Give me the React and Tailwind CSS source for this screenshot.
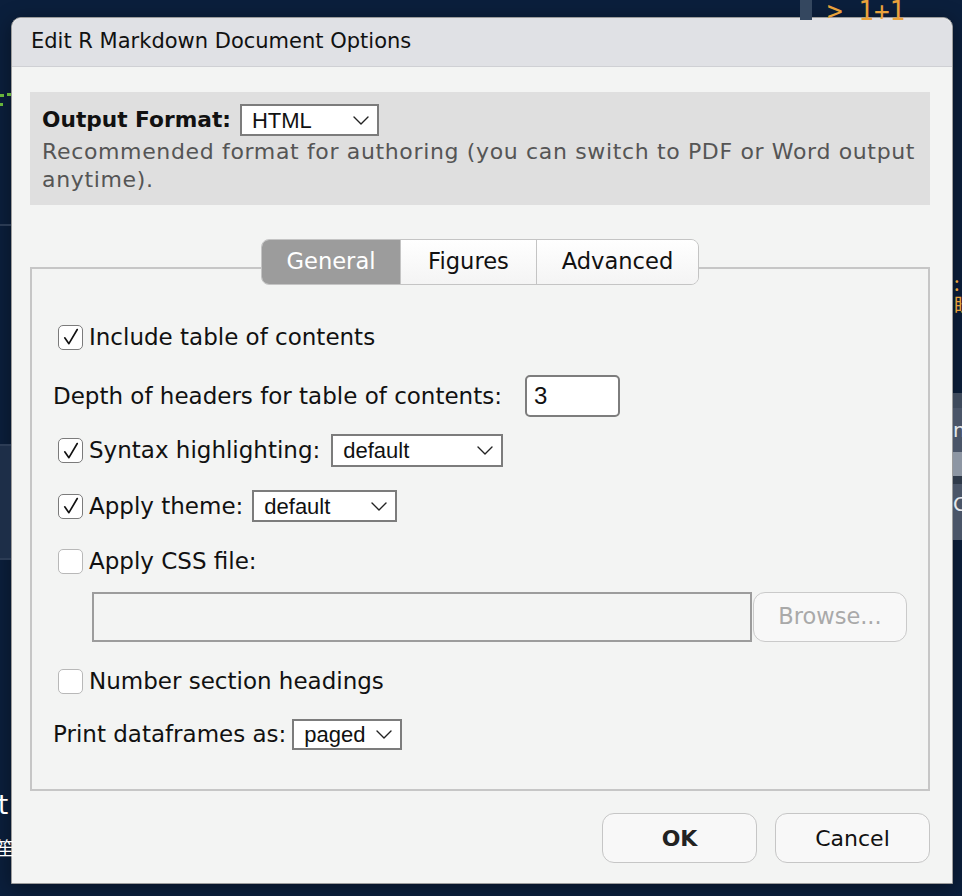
import React from 'react';

const Check = () => (
    <svg viewBox="0 0 24 24" className="w-[20px] h-[20px]" fill="none" stroke="#111" strokeWidth="2" strokeLinecap="round" strokeLinejoin="round">
        <path d="M4.5 13 L9.5 20 L19.5 3" />
    </svg>
);

const Chevron = () => (
    <svg viewBox="0 0 16 9" className="w-[16px] h-[9px]" fill="none" stroke="#222" strokeWidth="1.4" strokeLinecap="round" strokeLinejoin="round">
        <path d="M1 1 L8 8 L15 1" />
    </svg>
);

const Checkbox = ({ checked }) => (
    <span className={`w-[25px] h-[25px] shrink-0 rounded-[5px] border-[1.5px] bg-white flex items-center justify-center ${checked ? 'border-[#7b7b7b]' : 'border-[#b8b8b8]'}`}>
        {checked && <Check />}
    </span>
);

const Select = ({ value, className }) => (
    <div className={`flex items-center justify-between bg-white border-2 border-[#7c7c7c] pl-[10px] pr-[8px] font-['Liberation_Sans',sans-serif] text-[22px] text-[#111] ${className}`}>
        <span>{value}</span>
        <Chevron />
    </div>
);

const CheckRow = ({ checked, label, className = '', children }) => (
    <div className={`flex items-center ml-[5px] ${className}`}>
        <Checkbox checked={checked} />
        <span className="ml-[6px]">{label}</span>
        {children}
    </div>
);

export default function App() {
    return (
        <div className="relative w-[962px] h-[896px] overflow-hidden bg-[#0b1f3c] font-['DejaVu_Sans',sans-serif]">
            {/* editor bits behind the modal */}
            <div className="absolute left-[800px] top-0 w-[12px] h-[20px] bg-[#34475f]" />
            <div className="absolute left-[827px] top-[-5px] font-['DejaVu_Sans_Mono',monospace] text-[26px] leading-[32px] text-[#e9a23b] whitespace-pre">&gt; 1+1</div>
            <div className="absolute left-0 top-[94px] w-[4px] h-[3px] bg-[#67b33a]" />
            <div className="absolute left-[7px] top-[93px] w-[4px] h-[3px] bg-[#67b33a]" />
            <div className="absolute left-0 top-[103px] w-[3px] h-[3px] bg-[#67b33a]" />
            <div className="absolute left-0 top-[224px] w-[11px] h-[2px] bg-[#2a3a52]" />
            <div className="absolute left-0 top-[444px] w-[11px] h-[116px] bg-[#1d2e48] border-y-2 border-[#2c3c55]" />
            <div className="absolute left-[-2px] top-[792px] text-[26px] text-white leading-none">t</div>
            <div className="absolute left-[-4px] top-[838px] text-[18px] text-white leading-none font-['Noto_Sans_CJK_SC',sans-serif]">笙</div>
            <div className="absolute left-[954px] top-[272px] text-[20px] text-[#e9a23b] leading-[22px] font-['Noto_Sans_CJK_SC',sans-serif]">:<br />眯</div>
            <div className="absolute left-[953px] top-[393px] w-[9px] h-[147px] bg-[#4a5568] flex flex-col">
                <div className="h-[15px] bg-[#3e4a5c]" />
                <div className="h-[44px] text-[#e5e7eb] text-[20px] leading-[44px]">n</div>
                <div className="h-[24px] bg-[#8d96a3]" />
                <div className="h-[8px] bg-[#2f3a4a]" />
                <div className="flex-1 text-[#e5e7eb] text-[20px] leading-[40px]">C</div>
            </div>

            <div className="pt-[17px] pl-[11px]">
                <div className="w-[942px] rounded-t-[10px] border border-[#9c9c9c] bg-[#f3f4f3] shadow-[0_4px_20px_rgba(0,0,0,0.4)]">
                    <div className="h-[49px] rounded-t-[10px] bg-[#e0e1e5] border-b border-[#cfd0d4] flex items-center pl-[19px] text-[21px] text-[#111]">
                        Edit R Markdown Document Options
                    </div>

                    <div className="pl-[18px] pr-[22px] pt-[25px] pb-[20px] text-[23px] text-[#111]">
                        <div className="h-[113px] bg-[#dfdfdf] pl-[12px] pt-[12px]">
                            <div className="flex items-center h-[32px]">
                                <span className="font-bold text-[21.7px] mr-[9px]">Output Format:</span>
                                <Select value="HTML" className="w-[139px] h-[32px]" />
                            </div>
                            <p className="mt-[2px] text-[22px] leading-[28px] tracking-[0.65px] text-[#555]">
                                Recommended format for authoring (you can switch to PDF or Word output
                                <br />
                                anytime).
                            </p>
                        </div>

                        {/* tabs */}
                        <div className="relative z-10 mt-[34px] flex justify-center">
                            <div className="flex h-[46px] rounded-[8px] border-[1.5px] border-[#c4c4c4] overflow-hidden text-[22.6px]">
                                <div className="w-[138px] bg-[#9c9c9c] text-white flex items-center justify-center">General</div>
                                <div className="w-[136px] bg-gradient-to-b from-white to-[#f4f4f4] border-l-[1.5px] border-[#c4c4c4] flex items-center justify-center">Figures</div>
                                <div className="w-[162px] bg-gradient-to-b from-white to-[#f4f4f4] border-l-[1.5px] border-[#c4c4c4] flex items-center justify-center">Advanced</div>
                            </div>
                        </div>

                        <div className="-mt-[18px] border-2 border-[#c6c6c6] pl-[21px] pt-[53px] pb-[39px]">
                            <CheckRow checked label="Include table of contents" className="h-[30px]" />

                            <div className="flex items-center h-[42px] mt-[23px]">
                                <span>Depth of headers for table of contents:</span>
                                <div className="ml-[23px] w-[95px] h-[42px] rounded-[5px] border-2 border-[#7d7d7d] bg-white flex items-center pl-[7px] font-['Liberation_Sans',sans-serif] text-[24px]">3</div>
                            </div>

                            <CheckRow checked label="Syntax highlighting:" className="h-[33px] mt-[17px]">
                                <Select value="default" className="ml-[11px] w-[172px] h-[33px]" />
                            </CheckRow>

                            <CheckRow checked label="Apply theme:" className="h-[32px] mt-[23px]">
                                <Select value="default" className="ml-[9px] w-[145px] h-[32px]" />
                            </CheckRow>

                            <CheckRow label="Apply CSS file:" className="h-[30px] mt-[24px]" />

                            <div className="flex items-center h-[50px] mt-[16px] ml-[39px]">
                                <div className="w-[660px] h-[50px] border-2 border-[#9c9c9c]" />
                                <button className="ml-[1px] w-[154px] h-[50px] rounded-[12px] border-[1.5px] border-[#cacaca] bg-[#f8f8f8] text-[22.5px] text-[#a9a9a9]">
                                    Browse...
                                </button>
                            </div>

                            <CheckRow label="Number section headings" className="h-[30px] mt-[24px]" />

                            <div className="flex items-center h-[31px] mt-[23px]">
                                <span>Print dataframes as:</span>
                                <Select value="paged" className="ml-[6px] w-[110px] h-[31px]" />
                            </div>
                        </div>

                        <div className="flex justify-end gap-[18px] mt-[22px] text-[22px]">
                            <button className="w-[155px] h-[50px] rounded-[12px] border-[1.5px] border-[#c6c6c6] bg-[#f8f8f8] font-bold text-[#222]">OK</button>
                            <button className="w-[155px] h-[50px] rounded-[12px] border-[1.5px] border-[#c6c6c6] bg-[#f8f8f8] text-[#111]">Cancel</button>
                        </div>
                    </div>
                </div>
            </div>
        </div>
    );
}
